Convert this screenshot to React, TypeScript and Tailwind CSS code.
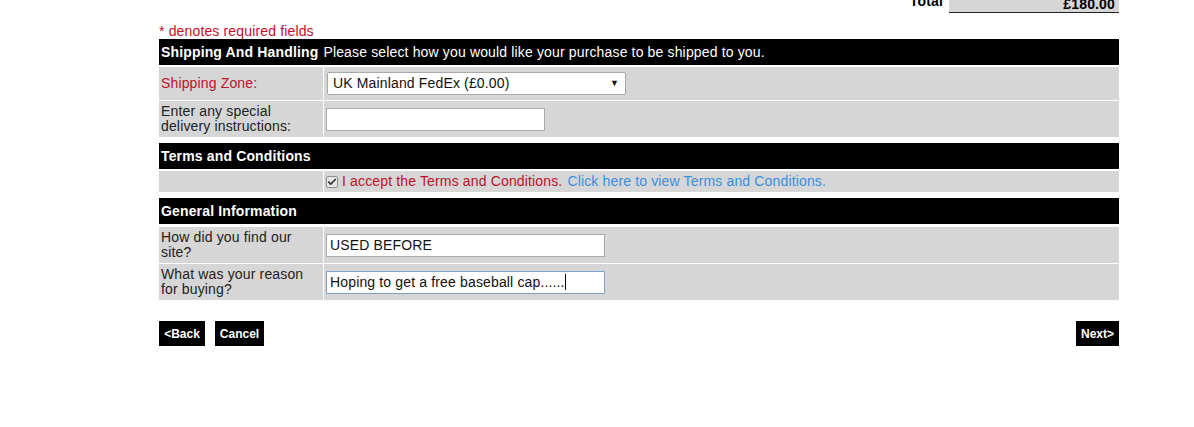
import { Check } from 'lucide-react';

const sans = "font-['Liberation_Sans',Arial,sans-serif]";

function SectionHeader({ title, note }: { title: string; note?: string }) {
    return (
        <div className="h-[26px] bg-black text-white flex items-center px-[2px]">
            <span className="font-bold">{title}</span>
            {note && <span className="ml-[5px]">{note}</span>}
        </div>
    );
}

function Row({ label, labelClass = 'text-[#222]', height, children }: { label?: string; labelClass?: string; height: string; children?: React.ReactNode }) {
    return (
        <div className={`grid grid-cols-[164px_1fr] gap-x-[1px] ${height}`}>
            <div className={`bg-[#d6d6d6] flex items-center pl-[2px] pr-[10px] leading-[15px] ${labelClass}`}>{label}</div>
            <div className="bg-[#d6d6d6] flex items-center px-[2px]">{children}</div>
        </div>
    );
}

export default function App() {
    return (
        <div className={`${sans} text-[14px] tracking-[0.15px] bg-white min-h-[427px] overflow-hidden`}>
            <div className="w-[960px] ml-[159px]">
                {/* Basket total (scrolled off the top) */}
                <div className="flex justify-end items-end -mt-[9px]">
                    <span className="font-bold text-black mr-[6px] mb-[1px]">Total</span>
                    <div className="w-[170px] h-[21px] bg-[#d6d6d6] border-b border-[#222] flex items-end justify-end pr-[4px] pb-0 leading-[16px] font-bold">
                        £180.00
                    </div>
                </div>

                <div className="mt-[10px] text-[#c0102a] leading-[16px]">* denotes required fields</div>

                {/* Shipping */}
                <div className="flex flex-col gap-[1px]">
                    <div className="mb-[1px]">
                        <SectionHeader title="Shipping And Handling" note="Please select how you would like your purchase to be shipped to you." />
                    </div>
                    <Row label="Shipping Zone:" labelClass="text-[#c0102a]" height="h-[33px]">
                        <div className="ml-[1px] w-[299px] h-[23px] bg-white border border-[#a9a9a9] rounded-[2px] flex items-center justify-between pl-[5px] pr-[6px] text-[#111]">
                            <span>UK Mainland FedEx (£0.00)</span>
                            <span className="text-[9px]">▼</span>
                        </div>
                    </Row>
                    <Row label="Enter any special delivery instructions:" height="h-[36px]">
                        <div className="w-[219px] h-[23px] bg-white border border-[#a9a9a9]" />
                    </Row>
                </div>

                {/* Terms */}
                <div className="flex flex-col gap-[2px] mt-[6px]">
                    <SectionHeader title="Terms and Conditions" />
                    <Row height="h-[21px]">
                        <span className="w-[12px] h-[12px] bg-[#e6e6e6] border border-[#8f8f8f] rounded-[2px] flex items-center justify-center">
                            <Check className="w-[10px] h-[10px] text-[#333]" strokeWidth={4} />
                        </span>
                        <span className="ml-[4px] text-[#c0102a]">I accept the Terms and Conditions.</span>
                        <span className="ml-[5px] text-[#3b8fdf]">Click here to view Terms and Conditions.</span>
                    </Row>
                </div>

                {/* General */}
                <div className="flex flex-col gap-[1px] mt-[6px]">
                    <div className="mb-[2px]">
                        <SectionHeader title="General Information" />
                    </div>
                    <Row label="How did you find our site?" height="h-[36px]">
                        <div className="w-[279px] h-[23px] bg-white border border-[#a9a9a9] flex items-center px-[3px] text-[#111]">USED BEFORE</div>
                    </Row>
                    <Row label="What was your reason for buying?" height="h-[36px]">
                        <div className="w-[279px] h-[23px] bg-white border border-[#7da2ce] rounded-[1px] flex items-center px-[3px] text-[#111]">
                            Hoping to get a free baseball cap......
                            <span className="w-[1px] h-[16px] bg-black" />
                        </div>
                    </Row>
                </div>

                {/* Navigation buttons */}
                <div className="flex items-center mt-[21px] text-[12px] font-bold text-white tracking-normal">
                    <button className="h-[25px] w-[46px] bg-black flex items-center justify-center">&lt;Back</button>
                    <button className="h-[25px] w-[49px] bg-black flex items-center justify-center ml-[10px]">Cancel</button>
                    <button className="h-[25px] w-[43px] bg-black flex items-center justify-center ml-auto">Next&gt;</button>
                </div>
            </div>
        </div>
    );
}
